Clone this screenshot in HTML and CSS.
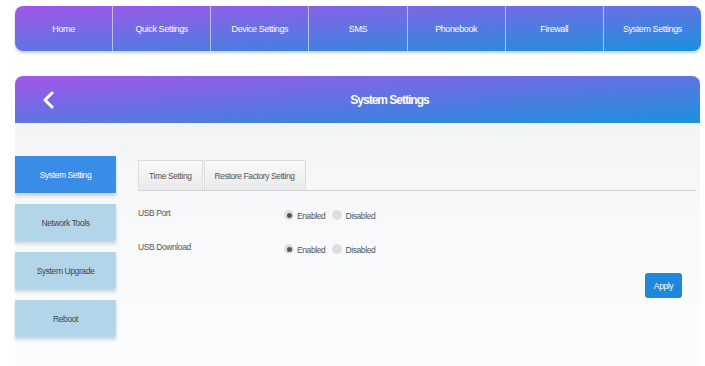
FILE: index.html
```html
<!DOCTYPE html>
<html lang="en">
<head>
  <meta charset="UTF-8" />
  <title>System Settings</title>
  <link rel="stylesheet" href="styles.css">
</head>
<body>
  <div class="page">
    <div class="nav">
      <a href="#">Home</a>
      <a href="#">Quick Settings</a>
      <a href="#">Device Settings</a>
      <a href="#">SMS</a>
      <a href="#">Phonebook</a>
      <a href="#">Firewall</a>
      <a href="#">System Settings</a>
    </div>

    <div class="header">
      <a class="back" href="#">
        <svg width="14" height="18" viewBox="0 0 14 18">
          <polyline points="10,2 3,9 10,16" fill="none" stroke="#fff" stroke-width="3" stroke-linecap="round" stroke-linejoin="round"/>
        </svg>
      </a>
      <div class="title">System Settings</div>
    </div>

    <div class="panel">
      <div class="side">
        <a class="side-btn active" href="#">System Setting</a>
        <a class="side-btn" href="#">Network Tools</a>
        <a class="side-btn" href="#">System Upgrade</a>
        <a class="side-btn" href="#">Reboot</a>
      </div>

      <div class="main">
        <div class="tabs">
          <span class="tab">Time Setting</span>
          <span class="tab">Restore Factory Setting</span>
        </div>

        <div class="rows">
          <div class="row">
            <span class="label">USB Port</span>
            <span class="radio checked"></span><span class="opt">Enabled</span>
            <span class="radio"></span><span class="opt">Disabled</span>
          </div>
          <div class="row">
            <span class="label">USB Download</span>
            <span class="radio checked"></span><span class="opt">Enabled</span>
            <span class="radio"></span><span class="opt">Disabled</span>
          </div>
        </div>

        <div class="actions">
          <button class="apply">Apply</button>
        </div>
      </div>
    </div>
  </div>
</body>
</html>
```

FILE: styles.css
```css
html, body {
  margin: 0;
  padding: 0;
  background: #fff;
  font-family: "Liberation Sans", sans-serif;
  color: #555;
  letter-spacing: -0.4px;
}

.page {
  padding: 6px 4px 0 15px;
}

.nav {
  display: flex;
  height: 45px;
  border-radius: 8px;
  background: linear-gradient(to bottom right, #a256ea, #5f74e2 50%, #1a92dd);
  box-shadow: 0 2px 3px rgba(90, 110, 150, 0.35);
  overflow: hidden;
}

.nav a {
  flex: 1;
  display: flex;
  align-items: center;
  justify-content: center;
  color: #fff;
  font-size: 9px;
  text-decoration: none;
  border-left: 1px solid rgba(255, 255, 255, 0.55);
}

.nav a:first-child {
  border-left: none;
}

.header {
  position: relative;
  margin-top: 25px;
  margin-right: 1px;
  padding-left: 64px;
  height: 47px;
  border-radius: 8px 8px 0 0;
  background: linear-gradient(to bottom right, #a256ea, #5f74e2 50%, #1a92dd);
  display: flex;
  align-items: center;
  justify-content: center;
}

.back {
  position: absolute;
  left: 27px;
  top: 15px;
  line-height: 0;
}

.title {
  color: #fff;
  font-size: 12px;
  font-weight: bold;
  letter-spacing: -1px;
}

.panel {
  display: flex;
  gap: 22px;
  margin-right: 1px;
  padding: 33px 4px 0 0;
  min-height: 210px;
  background: linear-gradient(#f3f4f6, #f8f9fa 45%, #fbfcfd);
}

.side {
  display: flex;
  flex-direction: column;
  gap: 11px;
  width: 101px;
}

.side-btn {
  height: 37px;
  display: flex;
  align-items: center;
  justify-content: center;
  background: #b3d5ea;
  color: #444;
  font-size: 8.5px;
  text-decoration: none;
  box-shadow: 0 3px 3px rgba(120, 130, 150, 0.3);
}

.side-btn.active {
  background: #3a8de6;
  color: #fff;
}

.main {
  flex: 1;
  padding-top: 4px;
}

.tabs {
  display: flex;
  border-bottom: 1px solid #cfd3d8;
}

.tab {
  height: 29px;
  display: flex;
  align-items: center;
  padding: 0 10px;
  font-size: 8.5px;
  color: #555;
  border: 1px solid #dcdcdc;
  border-bottom: none;
  background: linear-gradient(#fafafa, #e9e9e9);
}

.tab + .tab {
  margin-left: 1px;
}

.rows {
  padding-top: 7px;
}

.row {
  display: flex;
  align-items: center;
  height: 34px;
  font-size: 8.5px;
}

.label {
  width: 146px;
  margin-top: -5px;
}

.radio {
  width: 10px;
  height: 10px;
  border-radius: 50%;
  background: #dedede;
  display: flex;
  align-items: center;
  justify-content: center;
  margin-right: 3px;
}

.radio.checked::after {
  content: "";
  width: 5px;
  height: 5px;
  border-radius: 50%;
  background: #555;
}

.opt {
  margin-right: 7px;
  margin-top: 2px;
}

.actions {
  display: flex;
  justify-content: flex-end;
  padding: 7px 14px 40px 0;
}

.apply {
  width: 37px;
  height: 25px;
  border: none;
  border-radius: 3px;
  background: #1f88dc;
  color: #fff;
  font-family: inherit;
  font-size: 8.5px;
  letter-spacing: -0.4px;
}
```
